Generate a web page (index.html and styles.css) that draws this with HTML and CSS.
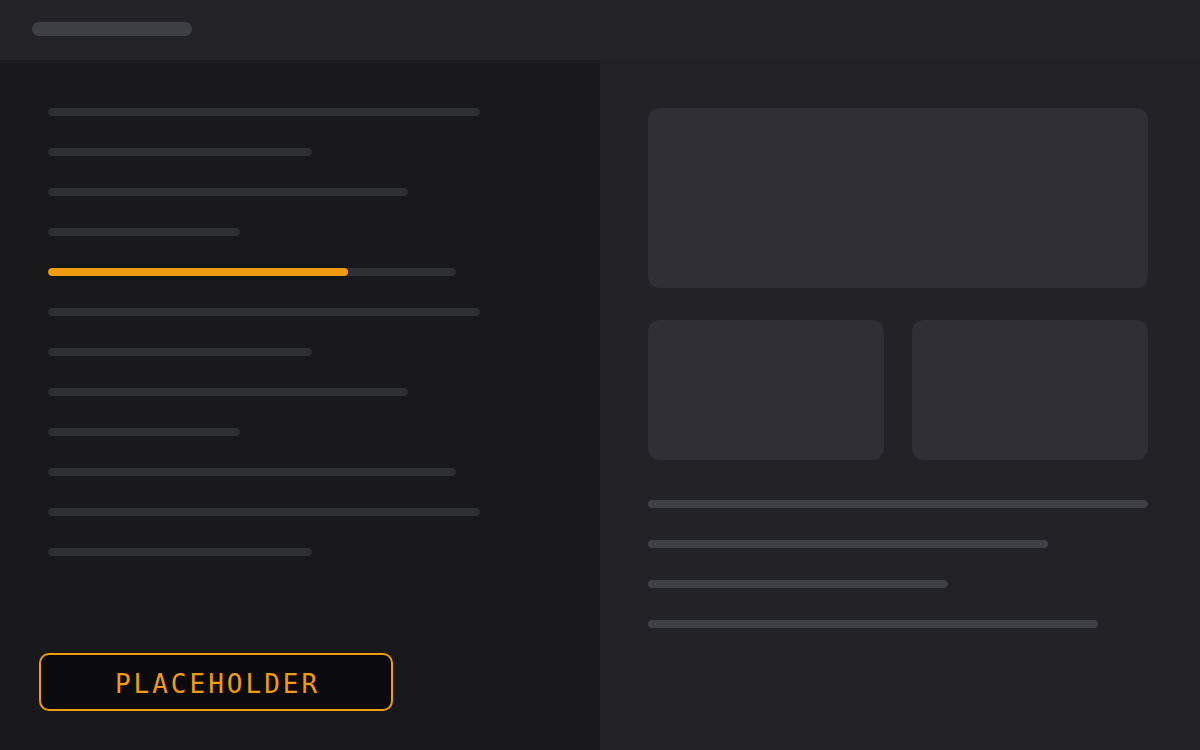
FILE: index.html
```html
<!DOCTYPE html>
<html>
<head>
<meta charset="utf-8">
<link rel="stylesheet" href="styles.css">
</head>
<body>
<header class="topbar"><div class="pill"></div></header>
<main class="main">
  <section class="left">
    <div class="lines">
      <div class="line w432"></div>
      <div class="line w264"></div>
      <div class="line w360"></div>
      <div class="line w192"></div>
      <div class="line w408"><div class="fill"></div></div>
      <div class="line w432"></div>
      <div class="line w264"></div>
      <div class="line w360"></div>
      <div class="line w192"></div>
      <div class="line w408"></div>
      <div class="line w432"></div>
      <div class="line w264"></div>
    </div>
    <button class="btn">PLACEHOLDER</button>
  </section>
  <section class="right">
    <div class="card big"></div>
    <div class="cards">
      <div class="card small"></div>
      <div class="card small"></div>
    </div>
    <div class="rlines">
      <div class="rline r500"></div>
      <div class="rline r400"></div>
      <div class="rline r300"></div>
      <div class="rline r450"></div>
    </div>
  </section>
</main>
</body>
</html>
```
FILE: styles.css
```css
* { box-sizing: border-box; }
html, body { margin: 0; padding: 0; }
body { width: 1200px; height: 750px; overflow: hidden; background: #222227; font-family: "DejaVu Sans Mono", monospace; }
.topbar { height: 60px; background: #232328; padding: 22px 32px 0; }
.pill { width: 160px; height: 14px; border-radius: 7px; background: #3f4046; }
.main { display: flex; height: 690px; }
.left { width: 600px; background: #19191b; padding: 48px 0 0 48px; display: flex; flex-direction: column; }
.lines { display: flex; flex-direction: column; gap: 32px; }
.line { height: 8px; border-radius: 4px; background: #2f2f36; position: relative; overflow: hidden; }
.fill { height: 8px; width: 300px; border-radius: 4px; background: #f09c12; }
.w432 { width: 432px; }
.w264 { width: 264px; }
.w360 { width: 360px; }
.w192 { width: 192px; }
.w408 { width: 408px; }
.btn { margin: 97px 0 0 -9px; width: 354px; height: 58px; border: 2px solid #f09c12; border-radius: 10px; background: #0b0b0d; color: #f09c12; font-family: "DejaVu Sans Mono", monospace; font-size: 26px; letter-spacing: 3px; padding: 2px 0 0 3px; text-align: center; line-height: 54px; }
.right { flex: 1; padding: 48px; display: flex; flex-direction: column; }
.card { background: #2f2f35; border-radius: 12px; }
.big { width: 500px; height: 180px; }
.cards { display: flex; gap: 28px; margin-top: 32px; }
.small { width: 236px; height: 140px; }
.rlines { display: flex; flex-direction: column; gap: 32px; margin-top: 40px; }
.rline { height: 8px; border-radius: 4px; background: #3f4046; }
.r500 { width: 500px; }
.r400 { width: 400px; }
.r300 { width: 300px; }
.r450 { width: 450px; }
```
